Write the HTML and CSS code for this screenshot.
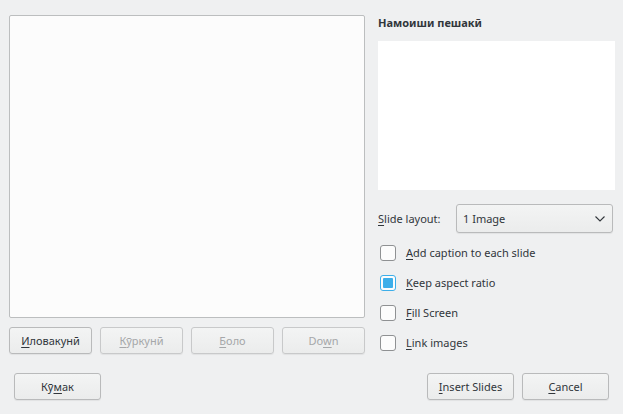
FILE: index.html
```html
<!DOCTYPE html>
<html>
<head>
<meta charset="utf-8">
<link rel="stylesheet" href="styles.css">
</head>
<body>
<div class="dialog">
  <div class="main">
    <div class="left">
      <div class="list"></div>
      <div class="btnrow">
        <button class="btn"><u>И</u>ловакунӣ</button>
        <button class="btn disabled"><u>К</u>ӯркунӣ</button>
        <button class="btn disabled"><u>Б</u>оло</button>
        <button class="btn disabled">Do<u>w</u>n</button>
      </div>
    </div>
    <div class="right">
      <div class="heading">Намоиши пешакӣ</div>
      <div class="preview"></div>
      <div class="layout-row">
        <span class="label"><u>S</u>lide layout:</span>
        <div class="combo">
          <span>1 Image</span>
          <svg class="chev" width="10" height="6" viewBox="0 0 10 6"><path d="M0.5 0.5 L5 5 L9.5 0.5" fill="none" stroke="#31363b" stroke-width="1.1"/></svg>
        </div>
      </div>
      <div class="checks">
        <div class="check"><span class="box"></span><span><u>A</u>dd caption to each slide</span></div>
        <div class="check"><span class="box on"></span><span><u>K</u>eep aspect ratio</span></div>
        <div class="check"><span class="box"></span><span><u>F</u>ill Screen</span></div>
        <div class="check"><span class="box"></span><span><u>L</u>ink images</span></div>
      </div>
    </div>
  </div>
  <div class="footer">
    <button class="btn wide">Кӯ<u>м</u>ак</button>
    <div class="footer-right">
      <button class="btn wide"><u>I</u>nsert Slides</button>
      <button class="btn wide"><u>C</u>ancel</button>
    </div>
  </div>
</div>
</body>
</html>
```

FILE: styles.css
```css
* { box-sizing: border-box; }
html, body {
  margin: 0;
  padding: 0;
  background: #eff0f1;
  font-family: "Noto Sans", "DejaVu Sans", sans-serif;
  font-size: 11px;
  color: #31363b;
}
u { text-decoration-thickness: 1px; text-underline-offset: 2px; }
.dialog {
  width: 623px;
  height: 414px;
  display: flex;
  flex-direction: column;
}
.main {
  display: flex;
  gap: 13px;
  padding: 15px 8px 0 9px;
}
.left {
  width: 356px;
  display: flex;
  flex-direction: column;
  gap: 9px;
}
.list {
  height: 303px;
  background: #fcfcfc;
  border: 1px solid #bcbebf;
  border-radius: 2px;
}
.btnrow {
  display: flex;
  gap: 8px;
}
.btn {
  width: 83px;
  height: 27px;
  padding: 0;
  font: inherit;
  color: #31363b;
  background: linear-gradient(#f3f4f4, #ebecec);
  border: 1px solid #b9babb;
  border-radius: 3px;
  box-shadow: 0 1px 1px rgba(0,0,0,0.06);
}
.btn.disabled {
  color: #a5a7a9;
  border-color: #c8c9ca;
}
.btn.wide { width: 87px; }
.right {
  width: 237px;
  display: flex;
  flex-direction: column;
}
.heading {
  font-weight: bold;
  line-height: 16px;
  height: 16px;
  margin-bottom: 10px;
}
.preview {
  height: 149px;
  background: #ffffff;
}
.layout-row {
  display: flex;
  align-items: center;
  margin-top: 14px;
}
.label {
  width: 78px;
}
.combo {
  flex: 1;
  height: 29px;
  margin-right: 2px;
  display: flex;
  align-items: center;
  justify-content: space-between;
  padding: 0 7px 0 6px;
  background: linear-gradient(#f3f4f4, #ebecec);
  border: 1px solid #b9babb;
  border-radius: 3px;
  box-shadow: 0 1px 1px rgba(0,0,0,0.06);
}
.checks {
  display: flex;
  flex-direction: column;
  gap: 14px;
  margin-top: 12px;
  padding-left: 2px;
}
.check {
  display: flex;
  align-items: center;
  gap: 10px;
  height: 16px;
  line-height: 16px;
}
.box {
  width: 16px;
  height: 16px;
  flex: none;
  background: #fcfcfc;
  border: 1px solid #8f9193;
  border-radius: 3px;
  display: flex;
  align-items: center;
  justify-content: center;
}
.box.on {
  border-color: #3daee9;
}
.box.on::after {
  content: "";
  width: 10px;
  height: 10px;
  background: #3daee9;
  border-radius: 1px;
}
.footer {
  display: flex;
  justify-content: space-between;
  padding: 19px 14px 0 14px;
}
.footer-right {
  display: flex;
  gap: 8px;
}
```
